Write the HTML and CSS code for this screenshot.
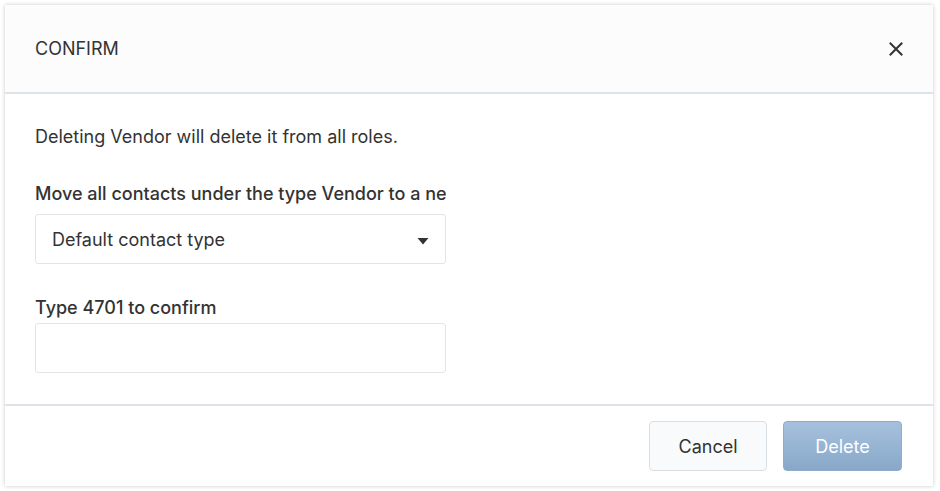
FILE: index.html
```html
<!DOCTYPE html>
<html>
<head>
<meta charset="utf-8">
<link rel="stylesheet" href="styles.css">
</head>
<body>
<div class="modal">
  <div class="modal-header">
    <span class="title">CONFIRM</span>
    <button class="close" aria-label="Close">
      <svg width="14" height="14" viewBox="0 0 14 14"><path d="M1.5 1.5 L12.5 12.5 M12.5 1.5 L1.5 12.5" stroke="#333" stroke-width="2" stroke-linecap="square"/></svg>
    </button>
  </div>
  <div class="modal-body">
    <p class="message">Deleting Vendor will delete it from all roles.</p>
    <div class="field">
      <label class="label">Move all contacts under the type Vendor to a new type</label>
      <div class="select">
        <span>Default contact type</span>
        <svg width="12" height="8" viewBox="0 0 12 8"><path d="M0.5 1 L11.5 1 L6 7.5 Z" fill="#333"/></svg>
      </div>
    </div>
    <div class="field field-confirm">
      <label class="label">Type 4701 to confirm</label>
      <div class="input"></div>
    </div>
  </div>
  <div class="modal-footer">
    <button class="btn btn-cancel">Cancel</button>
    <button class="btn btn-delete">Delete</button>
  </div>
</div>
</body>
</html>
```

FILE: styles.css
```css
html, body {
  margin: 0;
  padding: 0;
  background: #ffffff;
}
body {
  padding: 5px 7px 5px 5px;
  font-family: Inter, "Liberation Sans", Arial, sans-serif;
  color: #333333;
}
.modal {
  width: 928px;
  height: 481px;
  background: #ffffff;
  box-shadow: 0 0 4px rgba(0, 0, 0, 0.22);
  display: flex;
  flex-direction: column;
  box-sizing: border-box;
}
.modal-header {
  height: 87px;
  background: #fcfcfc;
  border-bottom: 2px solid #dce3e9;
  display: flex;
  align-items: center;
  justify-content: space-between;
  padding: 0 29px 0 30px;
  flex: none;
}
.title {
  font-size: 18px;
  line-height: 20px;
  color: #333;
}
.close {
  border: 0;
  background: transparent;
  padding: 0;
  width: 16px;
  height: 16px;
  display: flex;
  align-items: center;
  justify-content: center;
}
.modal-body {
  flex: 1;
  padding: 33px 30px 0 30px;
  border-bottom: 2px solid #dfe3e7;
}
.message {
  margin: 0;
  font-size: 18px;
  line-height: 20px;
}
.field {
  margin-top: 37px;
  width: 411px;
}
.field-confirm {
  margin-top: 34px;
}
.label {
  display: block;
  font-size: 18px;
  line-height: 20px;
  font-weight: 500;
  white-space: nowrap;
  overflow: hidden;
  margin-bottom: 10px;
  color: #333;
}
.select, .input {
  height: 50px;
  box-sizing: border-box;
  border: 1px solid #e2e4e6;
  border-radius: 3px;
  background: #fff;
}
.select {
  display: flex;
  align-items: center;
  justify-content: space-between;
  padding: 0 16px 0 16px;
  font-size: 18px;
}
.select svg {
  margin-top: 4px;
}
.field-confirm .label {
  margin-bottom: 5px;
}
.modal-footer {
  height: 80px;
  flex: none;
  display: flex;
  justify-content: flex-end;
  align-items: flex-start;
  gap: 16px;
  padding: 15px 31px 0 0;
  box-sizing: border-box;
}
.btn {
  height: 50px;
  border-radius: 4px;
  font-family: Inter, "Liberation Sans", Arial, sans-serif;
  font-size: 18px;
  padding: 0;
}
.btn-cancel {
  width: 118px;
  background: #f8fafc;
  border: 1px solid #d8dfe5;
  color: #333;
}
.btn-delete {
  width: 119px;
  background: linear-gradient(#a6c1dd, #88a8c9);
  border: 1px solid #8eaccb;
  color: #ffffff;
}
```
